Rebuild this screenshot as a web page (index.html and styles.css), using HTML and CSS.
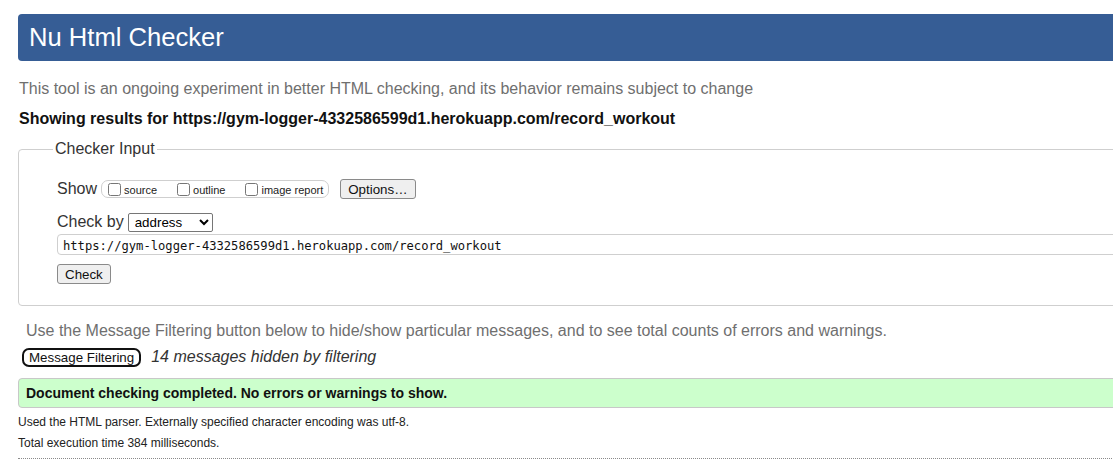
FILE: index.html
```html
<!DOCTYPE html>
<html lang="en">
<head>
<meta charset="utf-8">
<title>Showing results for https://gym-logger-4332586599d1.herokuapp.com/record_workout - Nu Html Checker</title>
<link rel="stylesheet" href="styles.css">
</head>
<body>
<div class="page">
  <h1 class="masthead">Nu Html Checker</h1>
  <p class="intro">This tool is an ongoing experiment in better HTML checking, and its behavior remains subject to change</p>
  <p class="results-for">Showing results for https://gym-logger-4332586599d1.herokuapp.com/record_workout</p>

  <fieldset class="checker">
    <legend class="checker-legend">Checker Input</legend>
    <div class="show-row">
      <span class="row-label">Show</span>
      <span class="checkboxes">
        <label class="cb"><input type="checkbox"><span>source</span></label>
        <label class="cb"><input type="checkbox"><span>outline</span></label>
        <label class="cb"><input type="checkbox"><span>image report</span></label>
      </span>
      <button class="btn btn-options" type="button">Options…</button>
    </div>
    <div class="checkby-row">
      <span class="row-label">Check by</span>
      <select class="select">
        <option>address</option>
        <option>file upload</option>
        <option>text input</option>
      </select>
    </div>
    <input class="url" type="text" value="https://gym-logger-4332586599d1.herokuapp.com/record_workout">
    <div class="submit-row"><button class="btn" type="button">Check</button></div>
  </fieldset>

  <p class="filter-hint">Use the Message Filtering button below to hide/show particular messages, and to see total counts of errors and warnings.</p>
  <div class="filter-row">
    <button class="filter-btn" type="button">Message Filtering</button>
    <em class="filter-note">14 messages hidden by filtering</em>
  </div>

  <div class="success">Document checking completed. No errors or warnings to show.</div>

  <p class="details">Used the HTML parser. Externally specified character encoding was utf-8.</p>
  <p class="details">Total execution time 384 milliseconds.</p>
  <div class="rule"></div>
</div>
</body>
</html>
```
FILE: styles.css
```css
html {
  overflow: hidden;
  background: #fff;
}
body {
  margin: 0;
  font-family: "Liberation Sans", Arial, sans-serif;
  font-size: 16px;
  color: #222;
}
.page {
  width: 1300px;
  padding: 14px 0 0 18px;
}
.masthead {
  margin: 0;
  height: 47px;
  line-height: 47px;
  padding-left: 11px;
  background: #365d95;
  color: #fff;
  font-size: 25.6px;
  font-weight: normal;
  border-radius: 4px;
}
.intro {
  margin: 18px 0 0 1px;
  line-height: 20px;
  color: #6f6f6f;
}
.results-for {
  margin: 10px 0 0 1px;
  line-height: 20px;
  font-weight: bold;
  color: #111;
}
.checker {
  margin: 10px 0 0 0;
  padding: 19px 0 21px 38px;
  border: 1px solid #cfcfcf;
  border-radius: 4px;
  min-width: 0;
}
.checker-legend {
  padding: 0 2px;
  margin-left: -4px;
  line-height: 20px;
  color: #333;
}
.show-row {
  display: flex;
  align-items: center;
  height: 22px;
}
.row-label {
  line-height: 20px;
  color: #333;
}
.checkboxes {
  display: inline-flex;
  align-items: center;
  box-sizing: border-box;
  height: 18px;
  margin-left: 4px;
  padding: 0 5px 0 2px;
  border: 1px solid #cfcfcf;
  border-radius: 7px;
}
.cb {
  display: inline-flex;
  align-items: center;
  font-size: 11px;
  color: #222;
}
.cb span {
  position: relative;
  top: 1px;
}
.cb + .cb {
  margin-left: 16px;
}
.cb input {
  width: 13px;
  height: 13px;
  margin: 0 3px 0 4px;
}
.btn {
  box-sizing: border-box;
  height: 20px;
  padding: 0 7px;
  font-family: "Liberation Sans", Arial, sans-serif;
  font-size: 13.33px;
  color: #111;
  background: #efefef;
  border: 1px solid #8a8a8a;
  border-radius: 3px;
}
.btn-options {
  margin-left: 11px;
}
.checkby-row {
  display: flex;
  align-items: center;
  height: 20px;
  margin-top: 12px;
}
.select {
  box-sizing: border-box;
  width: 85px;
  height: 19px;
  margin-left: 4px;
  padding: 0 0 0 2px;
  font-family: "Liberation Sans", Arial, sans-serif;
  font-size: 13.33px;
  color: #000;
  background: #fff;
  border: 1px solid #767676;
  border-radius: 2px;
}
.url {
  display: block;
  box-sizing: border-box;
  width: 1205px;
  height: 21px;
  margin-top: 2px;
  padding: 2px 0 0 5px;
  font-family: "DejaVu Sans Mono", "Liberation Mono", monospace;
  font-size: 12.15px;
  color: #111;
  border: 1px solid #cfcfcf;
  border-radius: 4px;
  outline: none;
}
.submit-row {
  margin-top: 9px;
  height: 20px;
}
.filter-hint {
  margin: 15px 0 0 8px;
  line-height: 20px;
  color: #6f6f6f;
}
.filter-row {
  display: flex;
  align-items: center;
  height: 20px;
  margin-top: 6px;
  padding-left: 4px;
}
.filter-btn {
  box-sizing: border-box;
  height: 19px;
  padding: 0 5px;
  font-family: "Liberation Sans", Arial, sans-serif;
  font-size: 13.33px;
  color: #111;
  background: #fff;
  border: 2px solid #111;
  border-radius: 7px;
}
.filter-note {
  margin-left: 10px;
  line-height: 20px;
  color: #333;
}
.success {
  box-sizing: border-box;
  height: 30px;
  margin-top: 11px;
  padding-left: 7px;
  line-height: 28px;
  font-size: 14px;
  font-weight: bold;
  color: #111;
  background: #ccffcc;
  border: 1px solid #c8c8c8;
  border-radius: 4px;
}
.details {
  margin: 0;
  line-height: 21px;
  font-size: 12px;
  color: #222;
}
.success + .details {
  margin-top: 4px;
}
.rule {
  margin-top: 4px;
  border-top: 1px dotted #8a8a8a;
}
```
